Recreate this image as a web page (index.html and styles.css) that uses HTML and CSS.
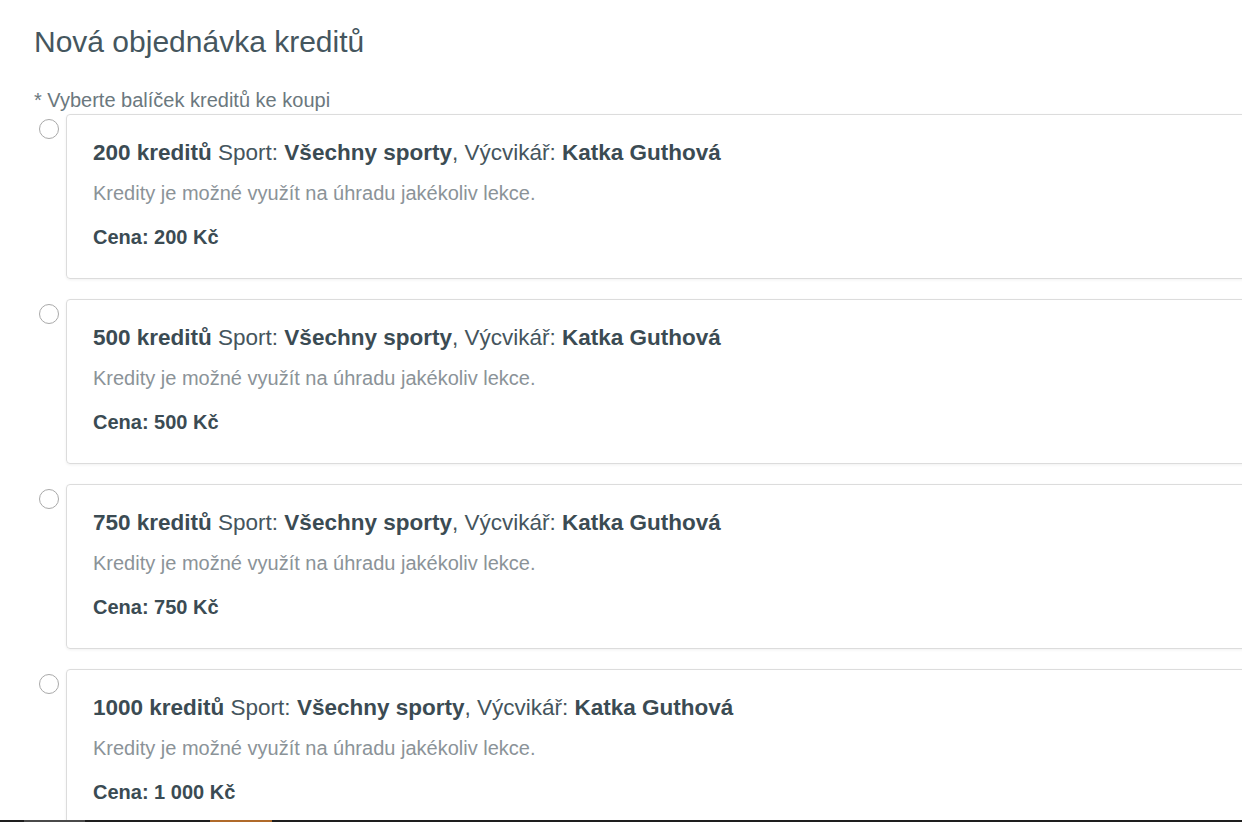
FILE: index.html
```html
<!DOCTYPE html>
<html lang="cs">
<head>
<meta charset="utf-8">
<title>Nová objednávka kreditů</title>
<link rel="stylesheet" href="styles.css">
</head>
<body>
<main class="page">
  <h1 class="title">Nová objednávka kreditů</h1>
  <p class="label">* Vyberte balíček kreditů ke koupi</p>
  <div class="options">
    <label class="option">
      <span class="radio"></span>
      <div class="card">
        <div class="card-title"><b>200 kreditů</b> Sport: <b>Všechny sporty</b>, Výcvikář: <b>Katka Guthová</b></div>
        <div class="card-desc">Kredity je možné využít na úhradu jakékoliv lekce.</div>
        <div class="card-price">Cena: 200 Kč</div>
      </div>
    </label>
    <label class="option">
      <span class="radio"></span>
      <div class="card">
        <div class="card-title"><b>500 kreditů</b> Sport: <b>Všechny sporty</b>, Výcvikář: <b>Katka Guthová</b></div>
        <div class="card-desc">Kredity je možné využít na úhradu jakékoliv lekce.</div>
        <div class="card-price">Cena: 500 Kč</div>
      </div>
    </label>
    <label class="option">
      <span class="radio"></span>
      <div class="card">
        <div class="card-title"><b>750 kreditů</b> Sport: <b>Všechny sporty</b>, Výcvikář: <b>Katka Guthová</b></div>
        <div class="card-desc">Kredity je možné využít na úhradu jakékoliv lekce.</div>
        <div class="card-price">Cena: 750 Kč</div>
      </div>
    </label>
    <label class="option">
      <span class="radio"></span>
      <div class="card">
        <div class="card-title"><b>1000 kreditů</b> Sport: <b>Všechny sporty</b>, Výcvikář: <b>Katka Guthová</b></div>
        <div class="card-desc">Kredity je možné využít na úhradu jakékoliv lekce.</div>
        <div class="card-price">Cena: 1 000 Kč</div>
      </div>
    </label>
  </div>
</main>
<div class="taskbar">
  <span class="tb-seg tb-grey"></span>
  <span class="tb-seg tb-orange"></span>
</div>
</body>
</html>
```

FILE: styles.css
```css
html, body {
  margin: 0;
  padding: 0;
  background: #ffffff;
  overflow: hidden;
  height: 822px;
}

body {
  font-family: "Liberation Sans", Arial, sans-serif;
  color: #3e4f57;
}

.page {
  padding: 24px 0 0 34px;
}

.title {
  margin: 0;
  font-size: 30px;
  font-weight: normal;
  line-height: 36px;
  color: #45565e;
}

.label {
  margin: 29px 0 0 0;
  font-size: 20px;
  line-height: 22px;
  color: #6b787e;
}

.options {
  display: flex;
  flex-direction: column;
  gap: 20px;
  margin-top: 3px;
}

.option {
  display: flex;
  align-items: flex-start;
  gap: 7px;
}

.radio {
  flex: none;
  width: 18px;
  height: 18px;
  margin: 5px 0 0 5px;
  border: 1px solid #a9a9a9;
  border-radius: 50%;
  background: #fff;
}

.card {
  flex: none;
  width: 1300px;
  box-sizing: border-box;
  border: 1px solid #dcdcdc;
  border-radius: 4px;
  box-shadow: 0 1px 3px rgba(0, 0, 0, 0.06);
  padding: 23px 26px 27px 26px;
}

.card-title {
  font-size: 22.5px;
  line-height: 30px;
  color: #45555d;
}

.card-title b {
  color: #3b4b53;
}

.card-desc {
  margin-top: 12px;
  font-size: 20px;
  line-height: 27px;
  color: #8b9398;
}

.card-price {
  margin-top: 17px;
  font-size: 20px;
  line-height: 27px;
  font-weight: bold;
  color: #3b4b53;
}

.taskbar {
  position: fixed;
  left: 0;
  right: 0;
  bottom: 0;
  height: 2px;
  background: #1e1e1e;
  display: flex;
}

.tb-seg {
  height: 2px;
}

.tb-grey {
  margin-left: 24px;
  width: 61px;
  background: #4a4a4a;
}

.tb-orange {
  margin-left: 125px;
  width: 62px;
  background: #b06a2a;
}
```
